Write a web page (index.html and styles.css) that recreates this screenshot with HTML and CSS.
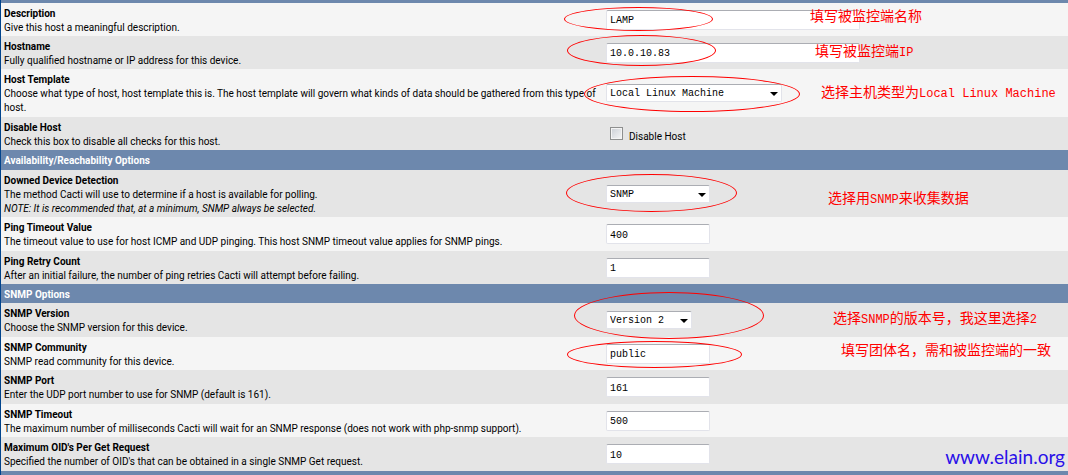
FILE: index.html
```html
<!DOCTYPE html>
<html lang="zh-CN">
<head>
<meta charset="utf-8">
<title>Device</title>
<link rel="stylesheet" href="styles.css">
</head>
<body>
<form class="device">
  <div class="bar"></div>

  <div class="row light">
    <div class="info"><label class="name" for="description">Description</label><p>Give this host a meaningful description.</p></div>
    <div class="field">
      <input class="text wide" id="description" type="text" value="LAMP">
      <span class="ring ring-description"></span>
      <span class="note note-description">填写被监控端名称</span>
    </div>
  </div>

  <div class="row dark">
    <div class="info"><label class="name" for="hostname">Hostname</label><p>Fully qualified hostname or IP address for this device.</p></div>
    <div class="field">
      <input class="text wide" id="hostname" type="text" value="10.0.10.83">
      <span class="ring ring-hostname"></span>
      <span class="note note-hostname">填写被监控端<span class="latin">IP</span></span>
    </div>
  </div>

  <div class="row light tall">
    <div class="info"><label class="name" for="template">Host Template</label><p>Choose what type of host, host template this is. The host template will govern what kinds of data should be gathered from this type of host.</p></div>
    <div class="field">
      <span class="picker picker-large"><select id="template"><option>Local Linux Machine</option></select></span>
      <span class="ring ring-template"></span>
      <span class="note note-template">选择主机类型为<span class="latin">Local Linux Machine</span></span>
    </div>
  </div>

  <div class="row dark">
    <div class="info"><span class="name">Disable Host</span><p>Check this box to disable all checks for this host.</p></div>
    <div class="field">
      <input class="check" id="disable" type="checkbox"><label class="check-label" for="disable">Disable Host</label>
    </div>
  </div>

  <h2 class="section section-tall">Availability/Reachability Options</h2>

  <div class="row dark">
    <div class="info"><label class="name" for="detection">Downed Device Detection</label><p>The method Cacti will use to determine if a host is available for polling.<br><em>NOTE: It is recommended that, at a minimum, SNMP always be selected.</em></p></div>
    <div class="field">
      <span class="picker picker-medium"><select id="detection"><option>SNMP</option></select></span>
      <span class="ring ring-detection"></span>
      <span class="note note-detection">选择用<span class="latin">SNMP</span>来收集数据</span>
    </div>
  </div>

  <div class="row light tall">
    <div class="info"><label class="name" for="ping-timeout">Ping Timeout Value</label><p>The timeout value to use for host ICMP and UDP pinging. This host SNMP timeout value applies for SNMP pings.</p></div>
    <div class="field"><input class="text" id="ping-timeout" type="text" value="400"></div>
  </div>

  <div class="row dark">
    <div class="info"><label class="name" for="retries">Ping Retry Count</label><p>After an initial failure, the number of ping retries Cacti will attempt before failing.</p></div>
    <div class="field"><input class="text" id="retries" type="text" value="1"></div>
  </div>

  <h2 class="section">SNMP Options</h2>

  <div class="row dark tall">
    <div class="info"><label class="name" for="version">SNMP Version</label><p>Choose the SNMP version for this device.</p></div>
    <div class="field">
      <span class="picker picker-small"><select id="version"><option>Version 2</option></select></span>
      <span class="ring ring-version"></span>
      <span class="note note-version">选择<span class="latin">SNMP</span>的版本号，我这里选择<span class="latin">2</span></span>
    </div>
  </div>

  <div class="row light">
    <div class="info"><label class="name" for="community">SNMP Community</label><p>SNMP read community for this device.</p></div>
    <div class="field">
      <input class="text" id="community" type="text" value="public">
      <span class="ring ring-community"></span>
      <span class="note note-community">填写团体名，需和被监控端的一致</span>
    </div>
  </div>

  <div class="row dark tall">
    <div class="info"><label class="name" for="port">SNMP Port</label><p>Enter the UDP port number to use for SNMP (default is 161).</p></div>
    <div class="field"><input class="text" id="port" type="text" value="161"></div>
  </div>

  <div class="row light">
    <div class="info"><label class="name" for="snmp-timeout">SNMP Timeout</label><p>The maximum number of milliseconds Cacti will wait for an SNMP response (does not work with php-snmp support).</p></div>
    <div class="field"><input class="text" id="snmp-timeout" type="text" value="500"></div>
  </div>

  <div class="row dark tall">
    <div class="info"><label class="name" for="oids">Maximum OID's Per Get Request</label><p>Specified the number of OID's that can be obtained in a single SNMP Get request.</p></div>
    <div class="field">
      <input class="text" id="oids" type="text" value="10">
      <span class="watermark">www.elain.org</span>
    </div>
  </div>

  <div class="bar"></div>
</form>
</body>
</html>
```

FILE: styles.css
```css
* {
  box-sizing: border-box;
}

body {
  margin: 0;
  overflow: hidden;
  background: #f5f5f5;
  color: #000;
  font: 10px/14px Roboto, "Open Sans", sans-serif;
}

p,
h2 {
  margin: 0;
}

.device {
  border-left: 1px solid #00438c;
}

.bar {
  height: 4px;
  background: #6d88ad;
}

.bar:first-child {
  height: 3px;
}

.row {
  display: grid;
  grid-template-columns: 605fr 462fr;
}

.light {
  background: #f5f5f5;
}

.dark {
  background: #e5e5e5;
}

.info {
  padding: 4px 4px 1px 3px;
}

.tall .info {
  padding-bottom: 2px;
}

.name {
  display: block;
  font-weight: 700;
}

.section {
  padding: 4px 3px 1px;
  background: #6d88ad;
  color: #fff;
  font-size: 10px;
  line-height: 14px;
}

.section-tall {
  padding-bottom: 2px;
}

.field {
  position: relative;
  display: flex;
  align-items: center;
}

.text,
.picker select {
  margin: 0;
  border: 1px solid #e2e3ea;
  border-top-color: #abadb3;
  border-radius: 2px;
  background: #fff;
  color: #000;
  font: 10px/14px "Liberation Mono", monospace;
}

.text {
  width: 104px;
  height: 20px;
  padding: 2px 3px 0;
}

.wide {
  width: 254px;
}

.picker {
  position: relative;
  display: flex;
}

.picker select {
  width: 100%;
  height: 18px;
  padding: 2px 3px 0;
  appearance: none;
}

.picker::after {
  content: "";
  position: absolute;
  top: 8px;
  right: 4px;
  border: 4px solid transparent;
  border-top-color: #000;
  border-bottom: 0;
  pointer-events: none;
}

.picker-large {
  width: 176px;
}

.picker-medium {
  width: 104px;
}

.picker-small {
  width: 86px;
}

.check {
  appearance: none;
  width: 13px;
  height: 13px;
  margin: 0 6px 0 4px;
  border: 1px solid #8e8f8f;
  background: linear-gradient(135deg, #cbcfd5, #f6f6f6);
  box-shadow: inset 0 0 0 1px #f4f4f4;
}

.check-label {
  padding-top: 6px;
}

.ring {
  position: absolute;
  z-index: 1;
  border: 1px solid #f00;
  border-radius: 50%;
  pointer-events: none;
}

.ring-description {
  left: -42px;
  top: 4px;
  width: 149px;
  height: 24px;
}

.ring-hostname {
  left: -39px;
  top: -1px;
  width: 149px;
  height: 31px;
}

.ring-template {
  left: -22px;
  top: 7px;
  width: 216px;
  height: 36px;
}

.ring-detection {
  left: -40px;
  top: 4px;
  width: 171px;
  height: 38px;
}

.ring-version {
  left: -32px;
  top: -11px;
  width: 190px;
  height: 47px;
}

.ring-community {
  left: -39px;
  top: 4px;
  width: 175px;
  height: 27px;
}

.note {
  position: absolute;
  z-index: 1;
  color: #f00;
  font: 14px/16px "Noto Sans CJK SC", sans-serif;
  white-space: nowrap;
}

.latin {
  font: 12px/16px "Liberation Mono", monospace;
}

.note-description {
  left: 204px;
  top: 4px;
}

.note-hostname {
  left: 209px;
  top: 6px;
}

.note-template {
  left: 215px;
  top: 14px;
}

.note-detection {
  left: 222px;
  top: 19px;
}

.note-version {
  left: 227px;
  top: 6px;
}

.note-community {
  left: 235px;
  top: 4px;
}

.watermark {
  position: absolute;
  right: 3px;
  bottom: 2px;
  color: #2a10e8;
  font: 19px/24px Lato, sans-serif;
}
```
